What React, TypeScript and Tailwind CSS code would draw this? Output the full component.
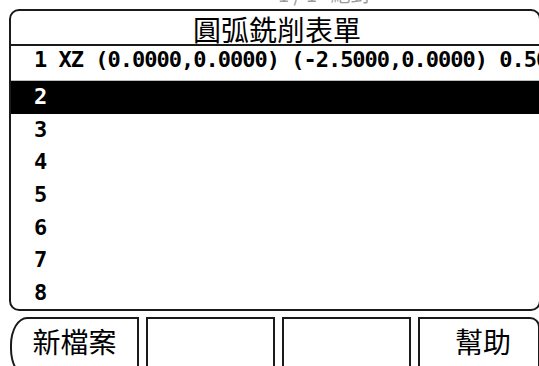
const rows = ['2', '3', '4', '5', '6', '7', '8'];

const mono = "font-['DejaVu_Sans_Mono','Liberation_Mono',monospace] font-bold text-[22px] tracking-[-1px] leading-none";
const cjk = "font-['Noto_Sans_CJK_TC','Noto_Sans_CJK_SC',sans-serif] font-normal leading-none";

export default function App() {
  return (
    <div className="w-[539px] h-[366px] bg-white overflow-hidden flex flex-col">
      {/* clipped status line above the panel */}
      <div className="h-[9px] shrink-0 overflow-hidden">
        <div className={`${cjk} text-[20px] text-[#9a9a9a] -mt-[16px] pl-[278px] whitespace-nowrap`}>
          1 / 1 &nbsp;&nbsp;絕對
        </div>
      </div>

      {/* table panel */}
      <div className="ml-[9px] w-[532px] h-[302px] shrink-0 border-2 border-[#1a1a1a] rounded-[10px] flex flex-col overflow-hidden">
        <div className={`${cjk} h-[35px] shrink-0 border-b-2 border-[#1a1a1a] text-[28px] text-black text-center pt-[4px] pl-[4px]`}>
          圓弧銑削表單
        </div>
        <div className={`${mono} h-[35px] shrink-0 border-b border-[#bdbdbd] pl-[23px] pt-[3px] whitespace-nowrap overflow-hidden text-black`}>
          1 XZ (0.0000,0.0000) (-2.5000,0.0000) 0.5000
        </div>
        <div className="flex-1 flex flex-col">
          {rows.map((r, i) => (
            <div
              key={r}
              className={`${mono} flex-1 flex items-center pl-[23px] ${i === 0 ? 'bg-black text-white' : 'text-black'}`}
            >
              {r}
            </div>
          ))}
        </div>
      </div>

      {/* soft keys */}
      <div className="mt-[6px] flex gap-[7px] pl-[10px] shrink-0">
        <div className={`${cjk} w-[129px] h-[60px] shrink-0 border-2 border-[#1a1a1a] rounded-tl-[17px_28px] rounded-bl-[17px_28px] text-[28px] text-black flex justify-center pt-[8px]`}>
          新檔案
        </div>
        <div className="w-[129px] h-[60px] shrink-0 border-2 border-[#1a1a1a]" />
        <div className="w-[129px] h-[60px] shrink-0 border-2 border-[#1a1a1a]" />
        <div className={`${cjk} w-[122px] h-[60px] shrink-0 border-2 border-[#1a1a1a] rounded-tr-[10px] text-[28px] text-black flex justify-center pt-[8px] pl-[8px]`}>
          幫助
        </div>
      </div>
    </div>
  );
}
